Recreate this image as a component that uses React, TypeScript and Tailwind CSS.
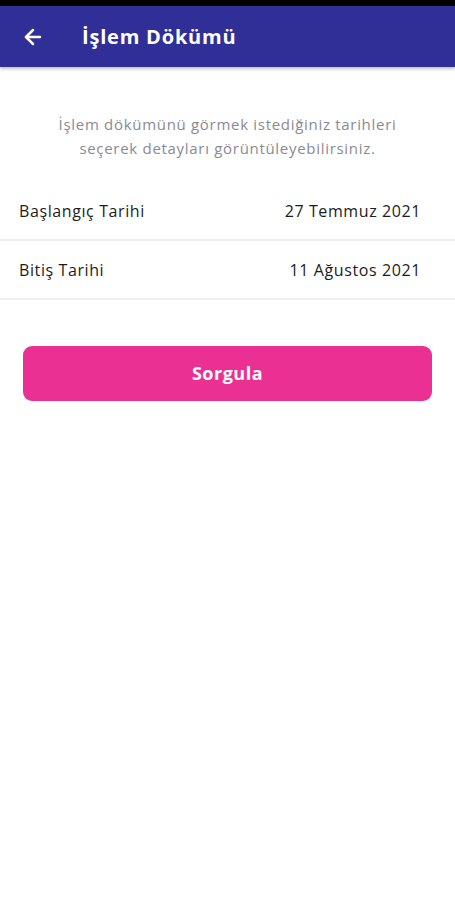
import { ArrowLeft } from 'lucide-react';

const rows = [
  { label: 'Başlangıç Tarihi', value: '27 Temmuz 2021' },
  { label: 'Bitiş Tarihi', value: '11 Ağustos 2021' }
];

export default function App() {
  return (
    <div className="min-h-[900px] w-[455px] bg-white font-['Open_Sans','Lato',sans-serif]">
      <div className="h-[6px] bg-black" />
      <header className="flex h-[61px] items-center bg-[#302f98] shadow-[0_2px_3px_rgba(0,0,0,0.25)]">
        <ArrowLeft className="ml-[21px] h-6 w-6 text-white" strokeWidth={2.5} />
        <h1 className="ml-[37px] text-[20px] font-bold tracking-[0.8px] text-white">İşlem Dökümü</h1>
      </header>

      <p className="mt-[45px] px-4 text-center text-[15px] leading-[24px] tracking-[0.7px] text-[#8a8a94]">
        İşlem dökümünü görmek istediğiniz tarihleri
        <br />
        seçerek detayları görüntüleyebilirsiniz.
      </p>

      <div className="mt-[22px]">
        {rows.map((row) => (
          <div
            key={row.label}
            className="flex h-[59px] items-center justify-between border-b-2 border-[#eeeeee] px-[19px] pr-[34px] text-[16px] tracking-[0.6px] text-[#1c1c1c]"
          >
            <span>{row.label}</span>
            <span>{row.value}</span>
          </div>
        ))}
      </div>

      <div className="px-[23px] pt-[46px]">
        <button
          type="button"
          className="flex h-[55px] w-full items-center justify-center rounded-[9px] bg-[#eb3093] text-[18px] font-bold tracking-[0.5px] text-white"
        >
          Sorgula
        </button>
      </div>
    </div>
  );
}
